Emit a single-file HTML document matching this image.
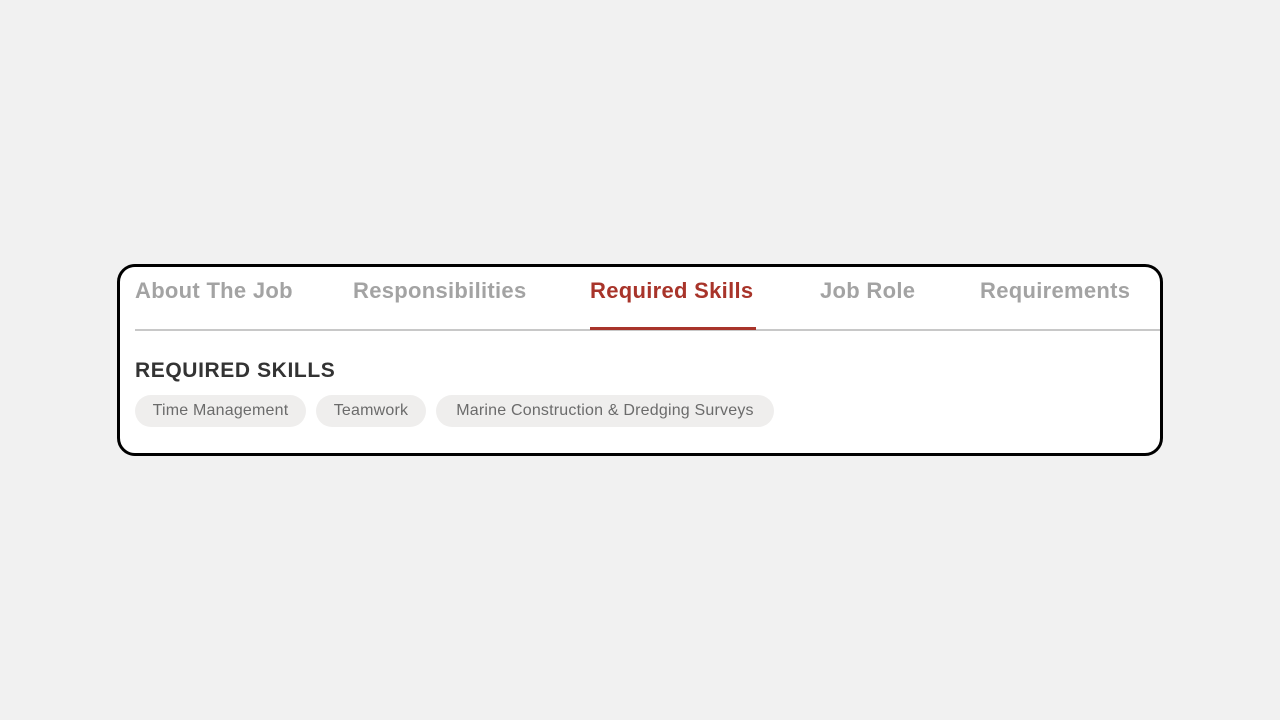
<!DOCTYPE html>
<html><head><style>
body{margin:0;width:1280px;height:720px;background:#f1f1f1;font-family:"Liberation Sans",sans-serif;position:relative;overflow:hidden}
.card{position:absolute;left:117px;top:264px;width:1040px;height:186px;border:3px solid #000;border-radius:18px;background:#fff;overflow:hidden}
.tab{position:absolute;top:11px;font-size:22px;font-weight:bold;color:#a3a3a3;white-space:nowrap;letter-spacing:0.3px}
.line{position:absolute;left:15px;right:0;top:62px;height:2px;background:#c8c8c8}
.ul{position:absolute;left:470px;width:166px;top:60px;height:3px;background:#a8342a}
h2{position:absolute;left:15px;top:92px;margin:0;font-size:21px;color:#333;letter-spacing:0.6px}
.chip{position:absolute;top:128px;height:32px;line-height:32px;border-radius:16px;background:#efeeed;color:#6b6b6b;font-size:16px;text-align:center;white-space:nowrap;letter-spacing:0.2px}
</style></head><body>
<div class="card">
<div class="tab" style="left:15px">About The Job</div>
<div class="tab" style="left:233px">Responsibilities</div>
<div class="tab" style="left:470px;color:#a8342a">Required Skills</div>
<div class="tab" style="left:700px">Job Role</div>
<div class="tab" style="left:860px">Requirements</div>
<div class="line"></div>
<div class="ul"></div>
<h2>REQUIRED SKILLS</h2>
<div class="chip" style="left:15px;width:171px">Time Management</div>
<div class="chip" style="left:196px;width:110px">Teamwork</div>
<div class="chip" style="left:316px;width:338px">Marine Construction &amp; Dredging Surveys</div>
</div>
</body></html>
